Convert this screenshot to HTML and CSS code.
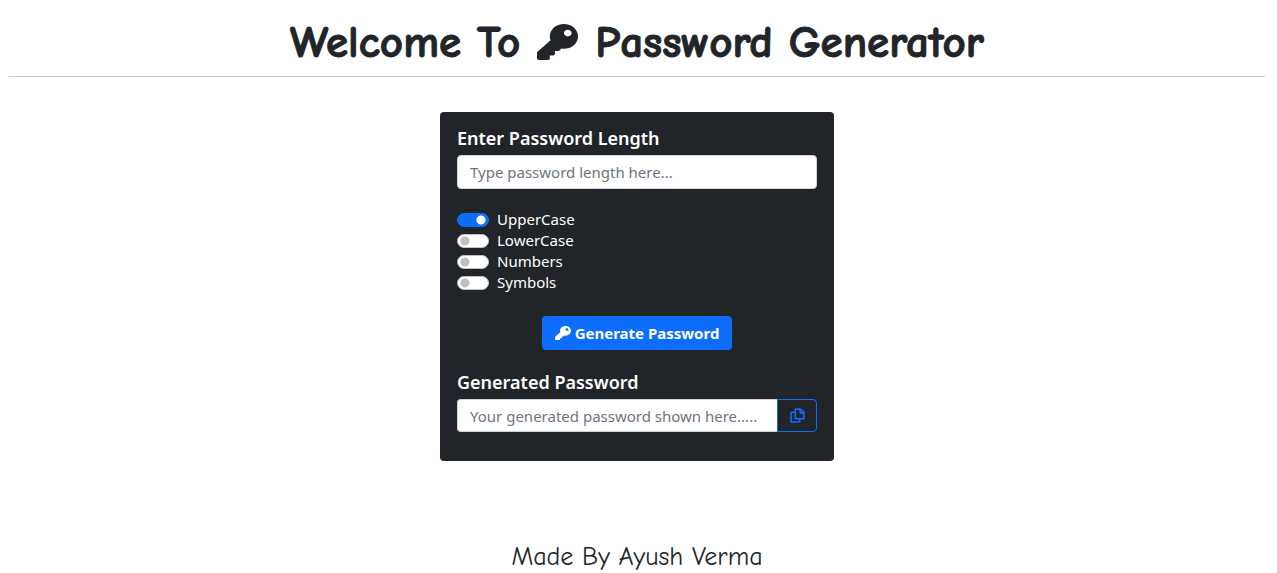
FILE: index.html
```html
<!DOCTYPE html>
<html lang="en">
<head>
<meta charset="utf-8">
<meta name="viewport" content="width=device-width, initial-scale=1">
<title>Password Generator</title>
<link rel="stylesheet" href="styles.css">
</head>
<body>
<svg class="defs" aria-hidden="true">
  <symbol id="key" viewBox="0 0 512 512" preserveAspectRatio="none"><path d="M512 176C512 273.200 433.200 352 336 352c-11.220 0-22.190-1.060-32.830-3.070l-24.010 27.010A24 24 0 0 1 261.220 384H224v40c0 13.250-10.750 24-24 24h-40v40c0 13.250-10.750 24-24 24H24c-13.250 0-24-10.750-24-24v-78.060c0-6.360 2.530-12.470 7.030-16.970l161.800-161.800C163.110 213.810 160 195.270 160 176 160 78.800 238.800 0 336 0 433.490 0 512 78.510 512 176zM336 128c0 26.510 21.490 48 48 48s48-21.490 48-48-21.490-48-48-48-48 21.490-48 48z"/></symbol>
</svg>
<header class="header">
  <h1 class="title"><span>Welcome To</span><svg class="title-icon" aria-hidden="true"><use href="#key"/></svg><span>Password Generator</span></h1>
</header>
<main class="card">
  <label class="label" for="length">Enter Password Length</label>
  <input class="field" id="length" type="text" placeholder="Type password length here...">
  <div class="options">
    <label class="option"><input class="switch" type="checkbox" checked>UpperCase</label>
    <label class="option"><input class="switch" type="checkbox">LowerCase</label>
    <label class="option"><input class="switch" type="checkbox">Numbers</label>
    <label class="option"><input class="switch" type="checkbox">Symbols</label>
  </div>
  <button class="generate" type="button"><svg class="generate-icon" aria-hidden="true"><use href="#key"/></svg>Generate Password</button>
  <label class="label" for="result">Generated Password</label>
  <div class="group">
    <input class="field field-joined" id="result" type="text" placeholder="Your generated password shown here.....">
    <button class="copy" type="button" aria-label="Copy password"><svg class="copy-icon" viewBox="0 0 14 14" aria-hidden="true"><path d="M5 1h5l3 3v6H5zM9.500 1v3.500H13M5 4H1v9h8v-3"/></svg></button>
  </div>
</main>
<footer class="footer">Made By Ayush Verma</footer>
</body>
</html>
```
FILE: styles.css
```css
* { box-sizing: border-box; }
body {
  margin: 0 12px 0 9px;
  background: #fff;
  color: #212529;
  font: 15px/21px "Noto Sans", "Open Sans", sans-serif;
}
.defs { display: block; width: 0; height: 0; }
.header {
  padding: 18px 0 10px;
  border-bottom: 1px solid #c8c9ca;
}
.title {
  display: flex;
  justify-content: center;
  align-items: center;
  gap: 17px;
  margin: 0;
  font: bold 45px/48px "Comic Sans MS", "Comic Neue", "Noto Sans", sans-serif;
  -webkit-text-stroke: 1px currentColor;
}
.title-icon { width: 41px; height: 36px; fill: currentColor; }
.card {
  display: flex;
  flex-direction: column;
  width: 100%;
  max-width: 394px;
  margin: 35px auto 0;
  padding: 16px 17px 29px;
  border-radius: 4px;
  background: #212529;
  color: #fff;
}
.label { margin-bottom: 6px; font-size: 18px; font-weight: 600; }
.field {
  width: 100%;
  height: 34px;
  padding: 0 12px;
  border: 1px solid #ced4da;
  border-radius: 4px;
  background: #fff;
  color: #212529;
  font: inherit;
}
.field::placeholder { color: #6c757d; opacity: 1; }
.options { display: grid; margin: 20px 0 23px; }
.option { display: flex; align-items: center; gap: 8px; width: max-content; }
.switch {
  appearance: none;
  width: 32px;
  height: 14px;
  margin: 0;
  border: 1px solid #bfbfbf;
  border-radius: 7px;
  background: radial-gradient(circle at 7px 6px, #bfbfbf 4px, transparent 5px) #fff;
}
.switch:checked {
  border-color: #0d6efd;
  background: radial-gradient(circle at 23px 6px, #fff 4px, transparent 5px) #0d6efd;
}
.generate {
  display: flex;
  align-self: center;
  align-items: center;
  gap: 4px;
  height: 34px;
  margin-bottom: 22px;
  padding: 0 13px;
  border: 0;
  border-radius: 4px;
  background: #0d6efd;
  color: #fff;
  font: bold 15px/21px "Noto Sans", "Open Sans", sans-serif;
}
.generate-icon { width: 16px; height: 14px; fill: currentColor; }
.group { display: flex; }
.field-joined { flex: 1; min-width: 0; height: 33px; border-right: 0; border-radius: 4px 0 0 4px; }
.copy {
  display: grid;
  place-items: center;
  width: 40px;
  padding: 0;
  border: 1px solid #0d6efd;
  border-radius: 0 4px 4px 0;
  background: transparent;
}
.copy-icon { width: 15px; height: 15px; fill: none; stroke: #0d6efd; stroke-width: 1.500; stroke-linejoin: round; }
.footer {
  padding-top: 80px;
  text-align: center;
  font: 26px/32px "Comic Sans MS", "Comic Neue", "Noto Sans", sans-serif;
}
```
